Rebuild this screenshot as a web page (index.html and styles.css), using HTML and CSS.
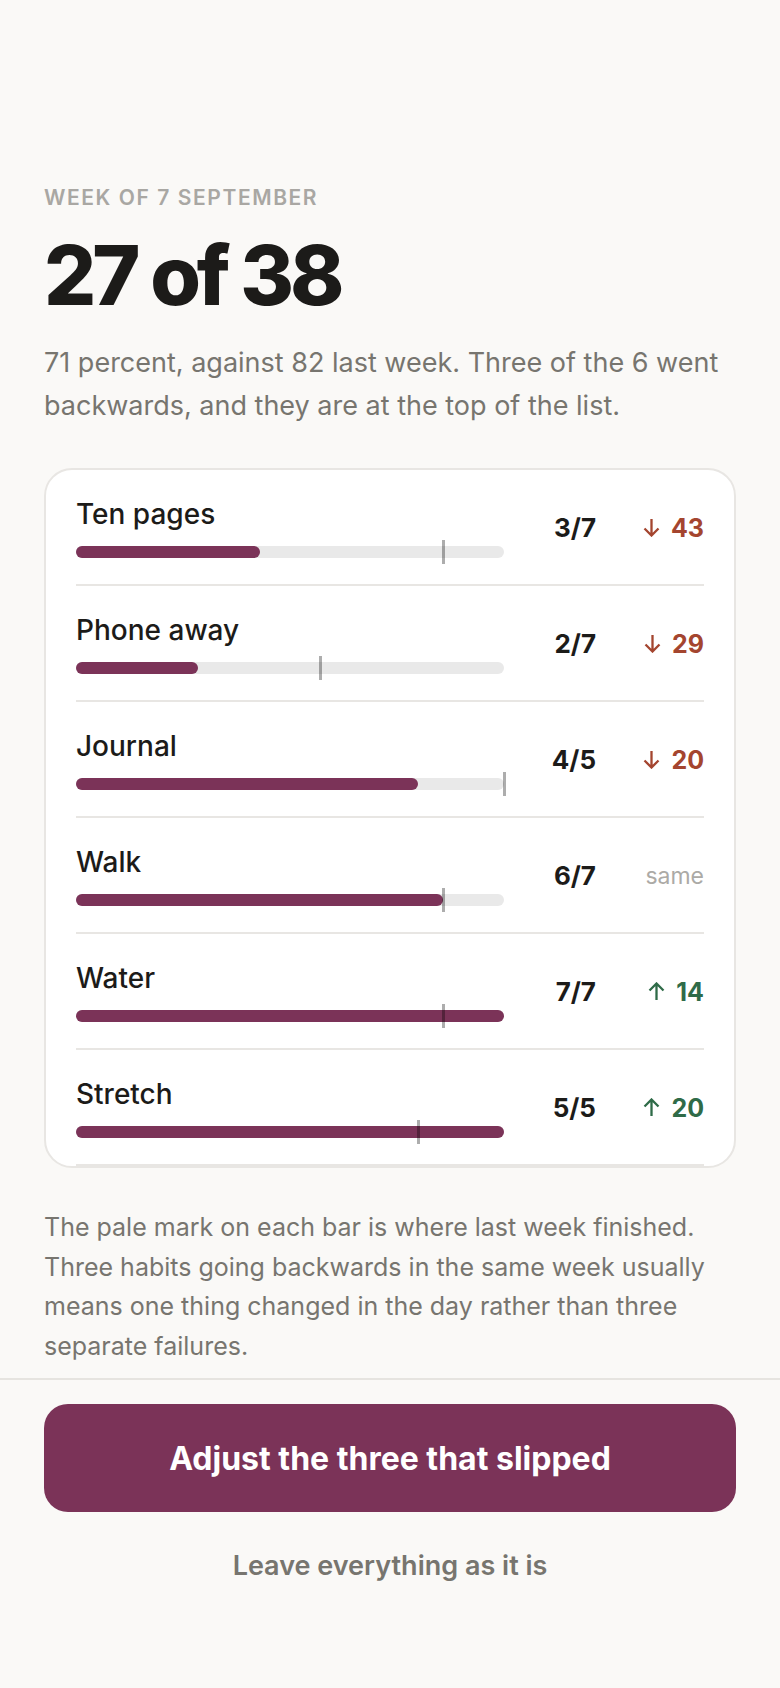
FILE: index.html
```html
<!DOCTYPE html>
<html lang="en">
<head>
  <meta charset="UTF-8" />
  <meta name="viewport" content="width=device-width, initial-scale=1.0"/>
  <title>Weekly habits</title>
  <link rel="stylesheet" href="styles.css">
</head>
<body>

<main class="summary">
  <p class="week-label">Week of 7 September</p>
  <h1 class="score">27 of 38</h1>
  <p class="intro">71 percent, against 82 last week. Three of the 6 went backwards, and they are at the top of the list.</p>

  <div class="habit-card" id="habitList">
    <!-- habit rows are added here -->
  </div>

  <p class="note">The pale mark on each bar is where last week finished. Three habits going backwards in the same week usually means one thing changed in the day rather than three separate failures.</p>
</main>

<footer class="actions">
  <button class="primary-btn">Adjust the three that slipped</button>
  <button class="plain-btn">Leave everything as it is</button>
</footer>

<script>
  const habits = [
    { name: 'Ten pages',  done: 3, of: 7, last: 6 / 7 },
    { name: 'Phone away', done: 2, of: 7, last: 4 / 7 },
    { name: 'Journal',    done: 4, of: 5, last: 5 / 5 },
    { name: 'Walk',       done: 6, of: 7, last: 6 / 7 },
    { name: 'Water',      done: 7, of: 7, last: 6 / 7 },
    { name: 'Stretch',    done: 5, of: 5, last: 4 / 5 }
  ];

  const upArrow = '<svg width="17" height="19" viewBox="0 0 17 19"><path d="M8.5 18V1.5M1.5 8.5l7-7 7 7"/></svg>';
  const downArrow = '<svg width="17" height="19" viewBox="0 0 17 19"><path d="M8.5 1v16.5M1.5 10.5l7 7 7-7"/></svg>';

  const list = document.getElementById('habitList');

  habits.forEach(habit => {
    const now = habit.done / habit.of;
    const diff = Math.round((now - habit.last) * 100);

    let delta = '<span class="delta same">same</span>';
    if (diff < 0) {
      delta = `<span class="delta down">${downArrow}${-diff}</span>`;
    } else if (diff > 0) {
      delta = `<span class="delta up">${upArrow}${diff}</span>`;
    }

    const row = document.createElement('div');
    row.className = 'habit-row';
    row.innerHTML = `
      <div class="habit-main">
        <div class="habit-name">${habit.name}</div>
        <div class="bar">
          <div class="bar-fill" style="width:${(now * 100).toFixed(1)}%"></div>
          <div class="bar-mark" style="left:${(habit.last * 100).toFixed(1)}%"></div>
        </div>
      </div>
      <span class="count">${habit.done}/${habit.of}</span>
      ${delta}
    `;
    list.appendChild(row);
  });
</script>

</body>
</html>
```

FILE: styles.css
```css
body {
  font-family: Inter, 'Noto Sans', sans-serif;
  margin: 0;
  background: #faf9f7;
  color: #1c1b19;
}
.summary {
  padding: 186px 44px 0;
}
.week-label {
  margin: 0;
  font-size: 21px;
  line-height: 24px;
  font-weight: 600;
  letter-spacing: 0.075em;
  text-transform: uppercase;
  color: #a9a7a3;
}
.score {
  margin: 25px 0 0;
  font-size: 82px;
  line-height: 82px;
  font-weight: 800;
  letter-spacing: -0.05em;
}
.intro {
  margin: 24px 0 0;
  font-size: 27px;
  line-height: 43px;
  color: #77756f;
}
.habit-card {
  margin-top: 41px;
  background: white;
  border: 2px solid #e8e6e3;
  border-radius: 28px;
  padding: 0 30px;
}
.habit-row {
  display: flex;
  align-items: center;
  padding: 27px 0 26px;
  border-bottom: 2px solid #e8e6e3;
}
.habit-main {
  flex: 1;
}
.habit-name {
  font-size: 28px;
  line-height: 34px;
  font-weight: 500;
}
.bar {
  position: relative;
  height: 12px;
  margin-top: 15px;
  background: #e9e9e9;
  border-radius: 6px;
}
.bar-fill {
  height: 100%;
  background: #7b3358;
  border-radius: 6px;
}
.bar-mark {
  position: absolute;
  top: -6px;
  width: 3px;
  height: 24px;
  margin-left: -1px;
  background: rgba(0, 0, 0, 0.32);
}
.count {
  width: 92px;
  text-align: right;
  font-size: 26px;
  font-weight: 700;
}
.delta {
  width: 108px;
  display: flex;
  justify-content: flex-end;
  align-items: center;
  gap: 11px;
  font-size: 25px;
  font-weight: 700;
}
.delta svg {
  fill: none;
  stroke: currentColor;
  stroke-width: 2.3;
}
.delta.down {
  color: #a4452f;
}
.delta.up {
  color: #2f6b48;
}
.delta.same {
  font-size: 23px;
  font-weight: 400;
  color: #acaaa6;
}
.note {
  margin: 40px 0 0;
  font-size: 25px;
  line-height: 39.5px;
  color: #77756f;
}
.actions {
  margin-top: 12px;
  border-top: 2px solid #e6e4e0;
  padding: 24px 44px 40px;
  display: flex;
  flex-direction: column;
}
.primary-btn {
  height: 108px;
  border: none;
  border-radius: 24px;
  background: #7b3358;
  color: white;
  font-family: inherit;
  font-size: 32px;
  font-weight: 700;
  cursor: pointer;
}
.plain-btn {
  margin-top: 36px;
  border: none;
  background: none;
  color: #77756f;
  font-family: inherit;
  font-size: 27px;
  font-weight: 600;
  cursor: pointer;
}
```
